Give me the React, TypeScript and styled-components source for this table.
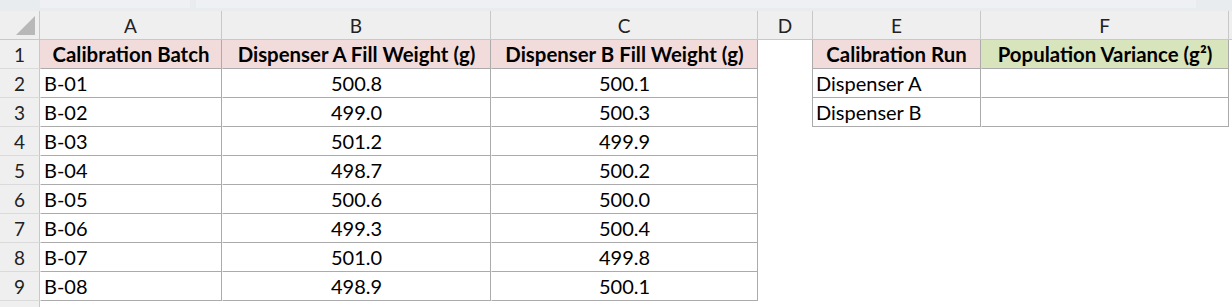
import React from "react";
import styled, { createGlobalStyle } from "styled-components";

const GlobalStyle = createGlobalStyle`
  html, body {
    margin: 0;
    padding: 0;
    background: #ffffff;
    overflow: hidden;
  }
`;

const FONT = `"Lato", "Open Sans", "Liberation Sans", sans-serif`;

const Page = styled.div`
  width: 1232px;
  height: 307px;
  overflow: hidden;
  font-family: ${FONT};
  color: #000;
`;

const TopStrip = styled.div`
  height: 11px;
  background: #e9ecef;
  display: flex;
  gap: 6px;
  padding-left: 40px;
`;

const StripPart = styled.div<{ w: number }>`
  width: ${(p) => p.w}px;
  height: 8px;
  background: #eef0f3;
`;

const Sheet = styled.div`
  display: grid;
  grid-template-columns: 40px 182px 269px 267px 55px 168px 248px 1fr;
  grid-auto-rows: 29px;
`;

const Corner = styled.div`
  background: #efefef;
  border-right: 1px solid #c8c8c8;
  border-bottom: 1px solid #c8c8c8;
  position: relative;
  box-sizing: border-box;
`;

const Triangle = styled.div`
  position: absolute;
  right: 4px;
  bottom: 4px;
  width: 0;
  height: 0;
  border-left: 19px solid transparent;
  border-bottom: 19px solid #b8b8b8;
`;

const ColHead = styled.div`
  background: #efefef;
  border-right: 1px solid #c8c8c8;
  border-bottom: 1px solid #c8c8c8;
  box-sizing: border-box;
  display: flex;
  align-items: center;
  justify-content: center;
  font-size: 19px;
  color: #222;
`;

const RowHead = styled.div`
  background: #efefef;
  border-right: 1px solid #c8c8c8;
  border-bottom: 1px solid #dadada;
  box-sizing: border-box;
  display: flex;
  align-items: center;
  justify-content: center;
  font-size: 19px;
  color: #222;
`;

type Fill = "none" | "pink" | "green";

const Cell = styled.div<{
  fill?: Fill;
  bold?: boolean;
  align?: "left" | "center";
  boxed?: boolean;
  edge?: boolean;
}>`
  box-sizing: border-box;
  display: flex;
  align-items: center;
  justify-content: ${(p) => (p.align === "center" ? "center" : "flex-start")};
  padding: 0 3px;
  font-size: ${(p) => (p.bold ? "20.4px" : "20px")};
  font-weight: ${(p) => (p.bold ? 700 : 400)};
  white-space: nowrap;
  background: ${(p) => (p.fill === "pink" ? "#f2dcdb" : p.fill === "green" ? "#d8e4bc" : "#ffffff")};
  border-left: 1px solid ${(p) => (p.edge ? "#ababab" : "transparent")};
  border-right: 1px solid ${(p) => (p.boxed ? "#ababab" : "transparent")};
  border-bottom: 1px solid ${(p) => (p.boxed ? "#ababab" : "transparent")};
  margin-left: ${(p) => (p.edge ? "-1px" : "0")};
`;

const batches = [
  ["B-01", "500.8", "500.1"],
  ["B-02", "499.0", "500.3"],
  ["B-03", "501.2", "499.9"],
  ["B-04", "498.7", "500.2"],
  ["B-05", "500.6", "500.0"],
  ["B-06", "499.3", "500.4"],
  ["B-07", "501.0", "499.8"],
  ["B-08", "498.9", "500.1"],
];

const runs = ["Dispenser A", "Dispenser B"];

export default function App() {
  const cols = ["A", "B", "C", "D", "E", "F"];
  return (
    <Page>
      <GlobalStyle />
      <TopStrip>
        <StripPart w={150} />
        <StripPart w={1000} />
      </TopStrip>
      <Sheet>
        <Corner>
          <Triangle />
        </Corner>
        {cols.map((c) => (
          <ColHead key={c}>{c}</ColHead>
        ))}
        <ColHead />

        <RowHead>1</RowHead>
        <Cell fill="pink" bold align="center" boxed>Calibration Batch</Cell>
        <Cell fill="pink" bold align="center" boxed>Dispenser A Fill Weight (g)</Cell>
        <Cell fill="pink" bold align="center" boxed>Dispenser B Fill Weight (g)</Cell>
        <Cell />
        <Cell fill="pink" bold align="center" boxed edge>Calibration Run</Cell>
        <Cell fill="green" bold align="center" boxed>Population Variance (g²)</Cell>
        <Cell />

        {batches.map((b, i) => (
          <React.Fragment key={b[0]}>
            <RowHead>{i + 2}</RowHead>
            <Cell boxed>{b[0]}</Cell>
            <Cell boxed align="center">{b[1]}</Cell>
            <Cell boxed align="center">{b[2]}</Cell>
            <Cell />
            {i < runs.length ? <Cell boxed edge>{runs[i]}</Cell> : <Cell />}
            {i < runs.length ? <Cell boxed /> : <Cell />}
            <Cell />
          </React.Fragment>
        ))}

        <RowHead />
      </Sheet>
    </Page>
  );
}
